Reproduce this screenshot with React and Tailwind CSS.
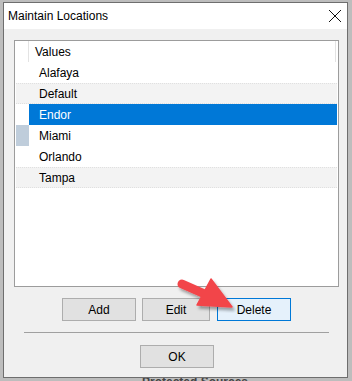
import React from "react";

const font = { fontFamily: '"Liberation Sans", Arial, sans-serif' };

function Row({ label, variant }) {
  const gray = variant === "gray";
  return (
    <div
      className={
        "flex h-[21px] w-full " +
        (gray
          ? "bg-[#f3f3f3] border-y border-dotted border-[#e0e0e0]"
          : "")
      }
    >
      <div
        className={
          "w-[13px] shrink-0 " + (variant === "current" ? "bg-[#bfcddb]" : "")
        }
      />
      <div
        className={
          "flex flex-1 items-center pl-[10px] text-[12px] " +
          (variant === "selected" ? "bg-[#0078d7] text-white" : "text-black")
        }
      >
        {label}
      </div>
    </div>
  );
}

function Btn({ children, className = "", active = false }) {
  return (
    <div
      className={
        "flex h-[23px] items-center justify-center text-[12px] text-black border " +
        (active
          ? "border-[#0078d7] bg-[#e5f1fb] "
          : "border-[#adadad] bg-[#e1e1e1] ") +
        className
      }
    >
      {children}
    </div>
  );
}

export default function App() {
  return (
    <div
      className="relative w-[352px] h-[381px] overflow-hidden bg-[#bdbdbd]"
      style={font}
    >
      <div className="ml-[3px] mt-[2px] flex h-[376px] w-[345px] flex-col border border-[#6e6e6e] bg-[#f0f0f0]">
        <div className="flex h-[26px] shrink-0 items-center justify-between bg-white pl-[4px] pr-[5px]">
          <span className="text-[12px] text-black">Maintain Locations</span>
          <svg width="14" height="14" viewBox="0 0 14 14">
            <path
              d="M1 1 L13 13 M13 1 L1 13"
              stroke="#111"
              strokeWidth="1"
              fill="none"
            />
          </svg>
        </div>

        <div className="flex flex-col pl-[10px] pt-[11px]">
          <div className="h-[247px] w-[325px] border border-[#9c9c9c] bg-white px-[1px]">
            <div className="flex h-[21px] w-full">
              <div className="w-[12px] shrink-0" />
              <div className="w-px shrink-0 bg-[#e3e3e3]" />
              <div className="flex flex-1 items-center pl-[6px] text-[12px] text-black">
                Values
              </div>
              <div className="w-px shrink-0 bg-[#e3e3e3] mr-[1px]" />
            </div>
            <Row label="Alafaya" variant="white" />
            <Row label="Default" variant="gray" />
            <Row label="Endor" variant="selected" />
            <Row label="Miami" variant="current" />
            <Row label="Orlando" variant="white" />
            <Row label="Tampa" variant="gray" />
          </div>

          <div className="mt-[11px] flex">
            <Btn className="ml-[48px] w-[74px]">Add</Btn>
            <Btn className="ml-[6px] w-[68px]">Edit</Btn>
            <Btn className="ml-[7px] w-[74px]" active>
              Delete
            </Btn>
          </div>

          <div className="mt-[11px] ml-[10px] h-px w-[305px] bg-[#a0a0a0]" />

          <div className="mt-[12px] flex">
            <Btn className="ml-[126px] w-[74px]">OK</Btn>
          </div>
        </div>
      </div>

      <div className="h-[3px] overflow-hidden pl-[142px]">
        <div className="text-[12px] leading-[8px] font-bold text-[#444]">
          Protected Sources
        </div>
      </div>

      <svg
        className="pointer-events-none absolute left-0 top-0"
        width="352"
        height="381"
        viewBox="0 0 352 381"
      >
        <defs>
          <filter id="sh" x="-20%" y="-20%" width="140%" height="140%">
            <feDropShadow
              dx="2"
              dy="3"
              stdDeviation="1.6"
              floodColor="#000"
              floodOpacity="0.35"
            />
          </filter>
        </defs>
        <g filter="url(#sh)">
          <line
            x1="182"
            y1="284"
            x2="207"
            y2="295"
            stroke="#f2454a"
            strokeWidth="9"
            strokeLinecap="round"
          />
          <polygon
            points="211,279 232,307 197,305"
            fill="#f2454a"
            stroke="#f2454a"
            strokeWidth="1.5"
            strokeLinejoin="round"
          />
        </g>
      </svg>
    </div>
  );
}
